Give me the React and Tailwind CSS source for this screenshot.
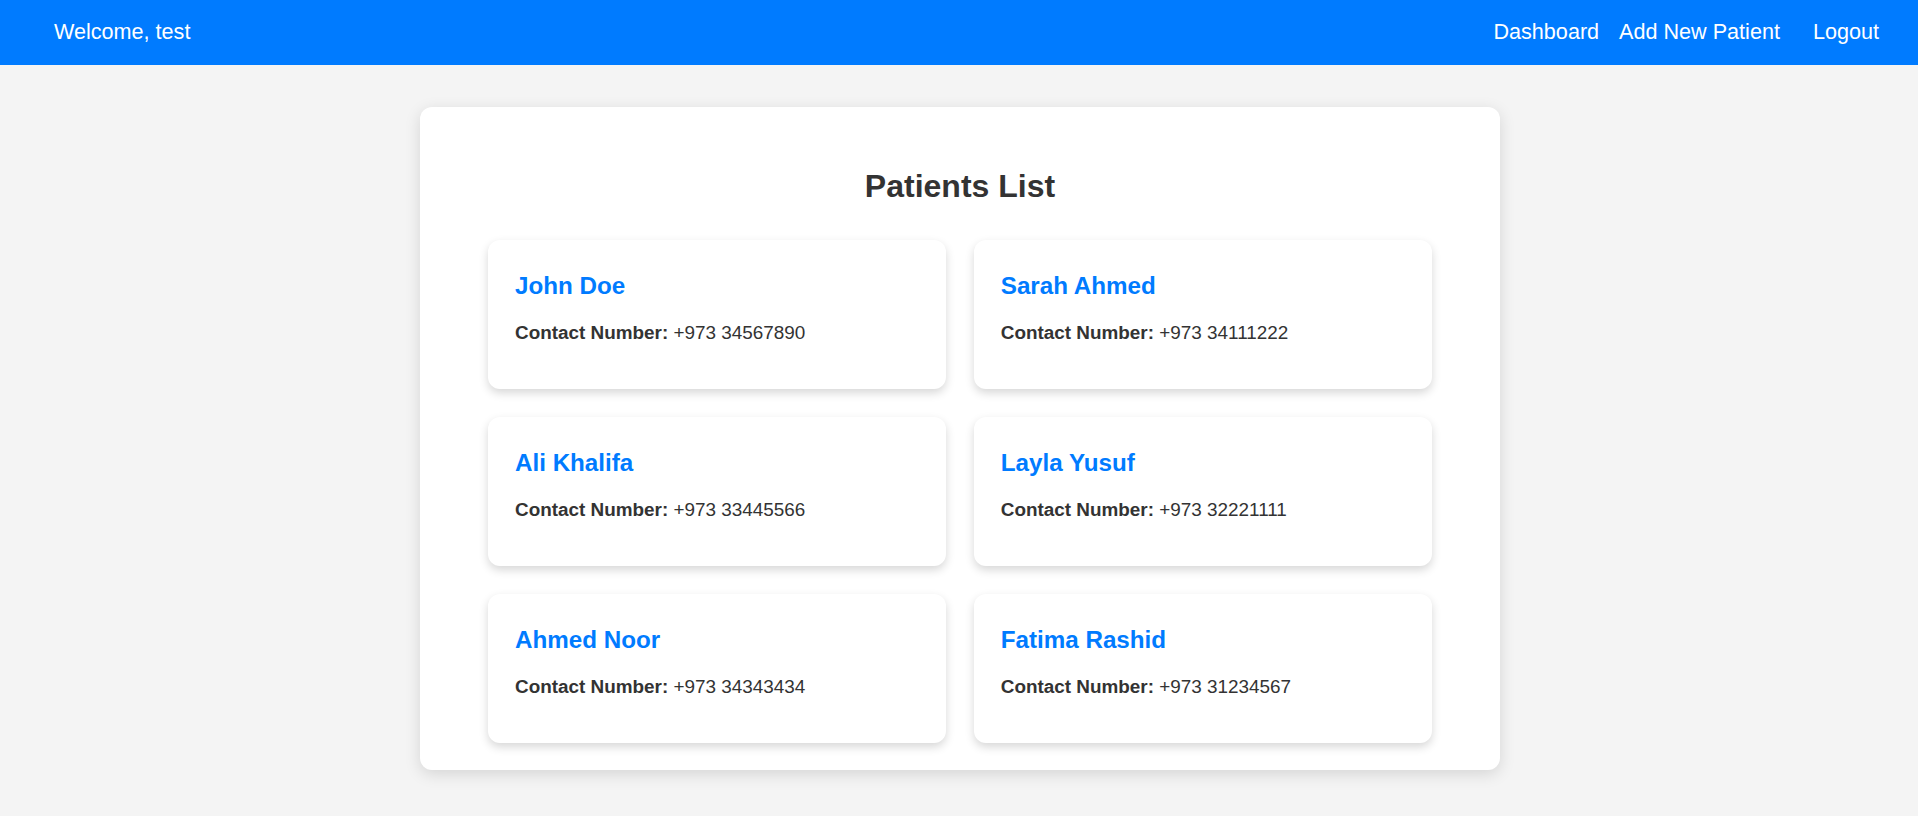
import React from "react";

const patients = [
  { name: "John Doe", phone: "+973 34567890" },
  { name: "Sarah Ahmed", phone: "+973 34111222" },
  { name: "Ali Khalifa", phone: "+973 33445566" },
  { name: "Layla Yusuf", phone: "+973 32221111" },
  { name: "Ahmed Noor", phone: "+973 34343434" },
  { name: "Fatima Rashid", phone: "+973 31234567" },
];

const Header = () => {
  return (
    <header className="h-[65px] bg-[#007bff] text-white flex items-center justify-between pl-[54px] pr-[39px] text-[21.6px]">
      <span>Welcome, test</span>
      <nav className="flex items-center">
        <a href="#" className="text-white">Dashboard</a>
        <a href="#" className="ml-[20px] text-white">Add New Patient</a>
        <a href="#" className="ml-[33px] text-white">Logout</a>
      </nav>
    </header>
  );
};

const PatientCard = ({ patient }) => {
  return (
    <div className="bg-white rounded-[12px] shadow-[0_4px_10px_rgba(0,0,0,0.16)] px-[27px] pt-[31.5px] pb-[44.5px]">
      <h3 className="text-[24.2px] leading-[28px] font-bold text-[#007bff]">{patient.name}</h3>
      <p className="mt-[21px] text-[18.9px] leading-[24px] text-[#333]">
        <strong className="font-bold">Contact Number:</strong> {patient.phone}
      </p>
    </div>
  );
};

export default function App() {
  return (
    <div className="min-h-screen bg-[#f4f4f4] font-['Liberation_Sans',Arial,sans-serif]">
      <Header />
      <main className="pt-[42px] pb-[40px] pl-[2px]">
        <div className="mx-auto w-[1080px] bg-white rounded-[12px] shadow-[0_4px_16px_rgba(0,0,0,0.13)] pt-[61px] pb-[27px]">
          <h2 className="text-center text-[32px] leading-[37px] font-bold text-[#333]">Patients List</h2>
          <div className="mt-[35px] px-[68px] grid grid-cols-2 gap-x-[27.5px] gap-y-[28px]">
            {patients.map((p) => (
              <PatientCard key={p.name} patient={p} />
            ))}
          </div>
        </div>
      </main>
    </div>
  );
}
